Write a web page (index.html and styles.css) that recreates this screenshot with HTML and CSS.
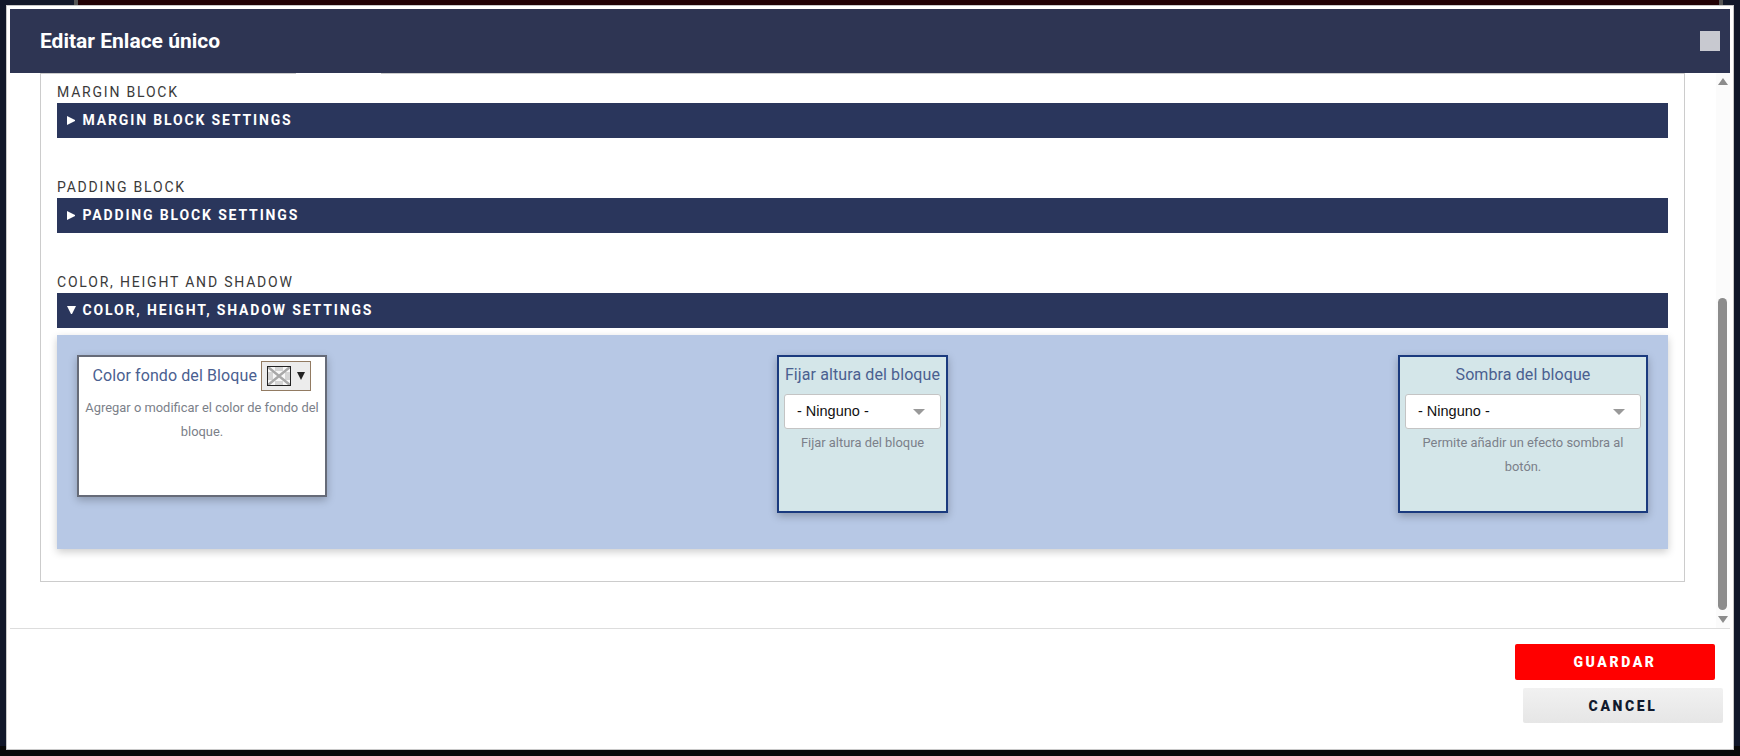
FILE: index.html
```html
<!DOCTYPE html>
<html>
	<head>
		<meta charset="UTF-8">
		<title>Editar Enlace único</title>
		<link rel="stylesheet" href="styles.css">
	</head>
	<body>
		<div class="modal">
			<div class="modal-head">
				<h1>Editar Enlace único</h1>
				<span class="close"></span>
			</div>
			<div class="modal-body">
				<div class="frame">
					<span class="tab-gap"></span>

					<div class="group">
						<div class="group-label">MARGIN BLOCK</div>
						<div class="bar"><i class="tri-right"></i>MARGIN BLOCK SETTINGS</div>
					</div>
					<div class="group">
						<div class="group-label">PADDING BLOCK</div>
						<div class="bar"><i class="tri-right"></i>PADDING BLOCK SETTINGS</div>
					</div>
					<div class="group group-open">
						<div class="group-label">COLOR, HEIGHT AND SHADOW</div>
						<div class="bar"><i class="tri-down"></i>COLOR, HEIGHT, SHADOW SETTINGS</div>
					</div>

					<div class="panel">
						<div class="card card-white">
							<div class="card-title card-title-row">
								Color fondo del Bloque
								<span class="color-btn">
									<svg class="swatch" width="24" height="20" viewBox="0 0 24 20">
										<rect width="24" height="20" fill="#f8f8f8"/>
										<path d="M1 6h5v8H1zM18 6h5v8h-5zM8 1h8v4H8zM8 15h8v4H8z" fill="#d4d4d4"/>
										<path d="M1 1l22 18M23 1L1 19" stroke="#a8a8a8" stroke-width="2.4" fill="none"/>
										<rect x="0.5" y="0.5" width="23" height="19" fill="none" stroke="#222"/>
									</svg>
									<i class="color-arrow"></i>
								</span>
							</div>
							<p>Agregar o modificar el color de fondo del bloque.</p>
						</div>
						<div class="card card-small">
							<div class="card-title">Fijar altura del bloque</div>
							<div class="select">- Ninguno -<i></i></div>
							<p>Fijar altura del bloque</p>
						</div>
						<div class="card card-wide">
							<div class="card-title">Sombra del bloque</div>
							<div class="select">- Ninguno -<i></i></div>
							<p>Permite añadir un efecto sombra al botón.</p>
						</div>
					</div>
				</div>
				<div class="scrollbar">
					<i class="sb-up"></i>
					<span class="sb-thumb"></span>
					<i class="sb-down"></i>
				</div>
			</div>
			<div class="modal-foot">
				<a href="javascript:;" class="btn btn-save">GUARDAR</a>
				<a href="javascript:;" class="btn btn-cancel">CANCEL</a>
			</div>
		</div>
	</body>
</html>
```

FILE: styles.css
```css
* {
	box-sizing: border-box;
}
html, body {
	height: 100%;
}
body {
	margin: 0;
	padding: 5px 6px 0;
	overflow: hidden;
	font-family: Roboto, "Liberation Sans", sans-serif;
	background:
		linear-gradient(90deg, transparent 74px, #555 74px, #555 78px, #200004 78px, #200004 1719px, #555 1719px, #555 1723px, transparent 1723px) top / 100% 5px no-repeat,
		linear-gradient(#12182a 746px, #0a0a0a 746px);
}
.modal {
	width: 1728px;
	height: 745px;
	padding: 3px;
	border: 1px solid #c8c8c8;
	background-color: #fff;
}
.modal-head {
	height: 64px;
	padding: 0 10px 0 30px;
	display: flex;
	align-items: center;
	justify-content: space-between;
	background-color: #2e3553;
}
.modal-head h1 {
	margin: 0;
	font-size: 21px;
	font-weight: 700;
	color: #fff;
}
.close {
	width: 20px;
	height: 20px;
	background-color: #c8c9d0;
}
.modal-body {
	height: 556px;
	padding-left: 30px;
	display: flex;
	justify-content: space-between;
	border-bottom: 1px solid #ddd;
}
.frame {
	position: relative;
	width: 1645px;
	height: 509px;
	padding: 1px 16px 0 16px;
	border: 1px solid #ccc;
}
.tab-gap {
	position: absolute;
	left: 255px;
	top: -1px;
	width: 85px;
	height: 2px;
	background-color: #fff;
}
.group {
	height: 95px;
	padding-top: 8px;
}
.group-open {
	height: 63px;
}
.group-label {
	height: 19px;
	margin-bottom: 1px;
	line-height: 19px;
	font-size: 14px;
	letter-spacing: 1.8px;
	color: #3a3a3a;
}
.bar {
	height: 34.6px;
	padding-left: 10px;
	display: flex;
	align-items: center;
	font-size: 14px;
	font-weight: 700;
	letter-spacing: 1.85px;
	color: #fff;
	background-color: #2a365c;
}
.tri-right {
	flex: none;
	width: 8px;
	height: 9px;
	margin-right: 7.5px;
	border-left: 8px solid #fff;
	border-top: 4.5px solid transparent;
	border-bottom: 4.5px solid transparent;
}
.tri-down {
	flex: none;
	width: 9px;
	height: 8px;
	margin-right: 6.5px;
	border-top: 8px solid #fff;
	border-left: 4.5px solid transparent;
	border-right: 4.5px solid transparent;
}
.panel {
	height: 214px;
	margin-top: 7px;
	padding: 20px;
	display: flex;
	justify-content: space-between;
	align-items: flex-start;
	background-color: #b7c8e5;
	box-shadow: 0 3px 8px rgba(0,0,0,0.2);
}
.card {
	height: 158px;
	padding: 0 5px;
	border: 2px solid #1a3a7e;
	background-color: #d4e6e9;
	box-shadow: 0 3px 8px rgba(0,0,0,0.25);
	text-align: center;
}
.card-white {
	width: 250px;
	height: 142px;
	border-color: #666b78;
	background-color: #fff;
}
.card-small {
	width: 171px;
}
.card-wide {
	width: 250px;
}
.card-title {
	height: 37px;
	line-height: 36px;
	font-size: 16px;
	letter-spacing: 0.1px;
	color: #4a6090;
	white-space: nowrap;
}
.card-title-row {
	display: flex;
	align-items: center;
	justify-content: flex-end;
	gap: 4px;
	padding-right: 9px;
}
.color-btn {
	width: 50px;
	height: 30px;
	padding-left: 5px;
	display: flex;
	align-items: center;
	gap: 6px;
	border: 1px solid #927b62;
	background-color: #ececec;
}
.swatch {
	display: block;
}
.color-arrow {
	width: 8px;
	height: 8px;
	border-top: 8px solid #222;
	border-left: 4px solid transparent;
	border-right: 4px solid transparent;
}
.select {
	position: relative;
	height: 35px;
	line-height: 33px;
	padding-left: 12px;
	border: 1px solid #c4c4c4;
	border-radius: 3px;
	background-color: #fff;
	text-align: left;
	font-family: "Liberation Sans", Arial, sans-serif;
	font-size: 14.5px;
	color: #111;
}
.select i {
	position: absolute;
	right: 15px;
	top: 14px;
	border-top: 6px solid #999;
	border-left: 6px solid transparent;
	border-right: 6px solid transparent;
}
.card p {
	margin: 2px 0 0;
	font-size: 12.9px;
	line-height: 24px;
	color: #7b8089;
}
.scrollbar {
	width: 14px;
	position: relative;
	background-color: #fbfbfb;
}
.sb-up {
	position: absolute;
	left: 2px;
	top: 5px;
	border-bottom: 7px solid #8c8c8c;
	border-left: 5px solid transparent;
	border-right: 5px solid transparent;
}
.sb-thumb {
	position: absolute;
	left: 2px;
	top: 225px;
	width: 9px;
	height: 312px;
	border-radius: 5px;
	background-color: #8c8c8c;
}
.sb-down {
	position: absolute;
	left: 2px;
	bottom: 5px;
	border-top: 7px solid #8c8c8c;
	border-left: 5px solid transparent;
	border-right: 5px solid transparent;
}
.modal-foot {
	padding: 15px 7px 0 0;
	display: flex;
	flex-direction: column;
	align-items: flex-end;
	gap: 8px;
}
.btn {
	width: 200px;
	text-align: center;
	text-decoration: none;
	font-size: 14px;
	font-weight: 900;
	letter-spacing: 2.6px;
	border-radius: 2px;
}
.btn-save {
	height: 36px;
	line-height: 36px;
	margin-right: 8px;
	color: #fff;
	background-color: #f00;
}
.btn-cancel {
	height: 35px;
	line-height: 36px;
	color: #111a2e;
	background: linear-gradient(#f1f1f1, #e6e6e6);
}
```
